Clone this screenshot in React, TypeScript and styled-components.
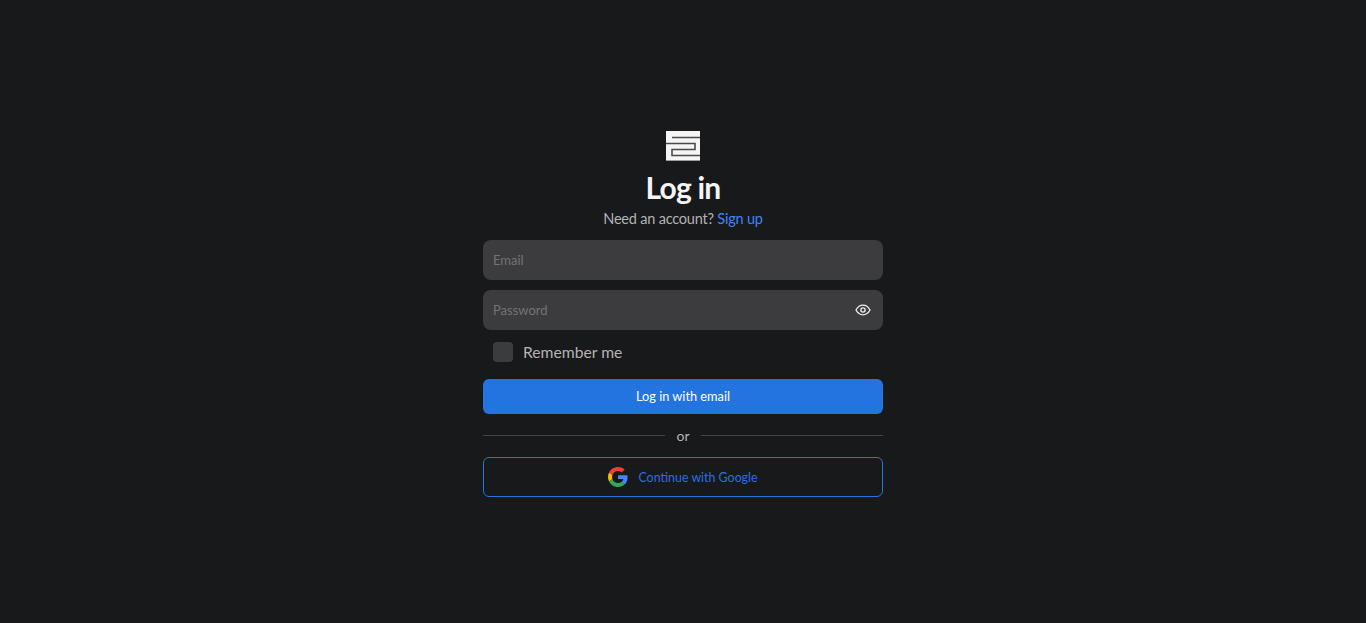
import React from 'react';
import styled, {createGlobalStyle} from 'styled-components';

const GlobalStyle = createGlobalStyle`
  html, body {
    margin: 0;
    height: 100%;
    background-color: #18191b;
  }
  body {
    font-family: 'Lato', 'Noto Sans', sans-serif;
  }
`;

function Logo(): JSX.Element {
  return (
    <LogoSvg viewBox="0 0 34 30" width={34} height={30}>
      <rect width="34" height="29.6" fill="#f5f5f5" />
      <path
        d="M6 6.5H34M0 12.5H29V18.5H6V24.5H34"
        fill="none"
        stroke="#4a4a4c"
        strokeWidth="1.6"
      />
    </LogoSvg>
  );
}

function EyeIcon(): JSX.Element {
  return (
    <svg viewBox="0 0 24 24" width={16} height={16} fill="none" stroke="#f0f0f0" strokeWidth="2">
      <path d="M1.5 12S5.5 4.8 12 4.8 22.5 12 22.5 12 18.5 19.2 12 19.2 1.5 12 1.5 12Z" />
      <circle cx="12" cy="12" r="3.2" />
    </svg>
  );
}

function GoogleIcon(): JSX.Element {
  return (
    <svg viewBox="0 0 48 48" width={20} height={20}>
      <path fill="#EA4335" d="M24 9.5c3.54 0 6.71 1.22 9.21 3.6l6.85-6.85C35.9 2.38 30.47 0 24 0 14.62 0 6.51 5.38 2.56 13.22l7.98 6.19C12.43 13.72 17.74 9.5 24 9.5z" />
      <path fill="#4285F4" d="M46.98 24.55c0-1.57-.15-3.09-.38-4.55H24v9.02h12.94c-.58 2.96-2.26 5.48-4.78 7.18l7.73 6c4.51-4.18 7.09-10.36 7.09-17.65z" />
      <path fill="#FBBC05" d="M10.53 28.59c-.48-1.45-.76-2.99-.76-4.59s.27-3.14.76-4.59l-7.98-6.19C.92 16.46 0 20.12 0 24c0 3.88.92 7.54 2.56 10.78l7.97-6.19z" />
      <path fill="#34A853" d="M24 48c6.48 0 11.93-2.13 15.89-5.81l-7.73-6c-2.15 1.45-4.92 2.3-8.16 2.3-6.26 0-11.57-4.22-13.47-9.91l-7.98 6.19C6.51 42.62 14.62 48 24 48z" />
    </svg>
  );
}

export default function App(): JSX.Element {
  return (
    <Page>
      <GlobalStyle />
      <Card>
        <Logo />
        <Title>Log in</Title>
        <Subtitle>
          Need an account? <SignUp href="#">Sign up</SignUp>
        </Subtitle>
        <Field>
          <Input type="email" placeholder="Email" />
        </Field>
        <Field>
          <Input type="password" placeholder="Password" />
          <EyeButton type="button">
            <EyeIcon />
          </EyeButton>
        </Field>
        <RememberRow>
          <CheckBox />
          <RememberLabel>Remember me</RememberLabel>
        </RememberRow>
        <PrimaryButton type="button">Log in with email</PrimaryButton>
        <Divider>
          <Rule />
          <DividerText>or</DividerText>
          <Rule />
        </Divider>
        <GoogleButton type="button">
          <GoogleIcon />
          Continue with Google
        </GoogleButton>
      </Card>
    </Page>
  );
}

const Page = styled.div`
  min-height: 623px;
  display: flex;
  justify-content: center;
  padding-top: 131px;
  box-sizing: border-box;
  background-color: #18191b;
`;
const Card = styled.div`
  width: 400px;
  display: flex;
  flex-direction: column;
  align-items: center;
`;
const LogoSvg = styled.svg`
  display: block;
  flex-shrink: 0;
`;
const Title = styled.h1`
  margin: 6px 0 0;
  font-size: 30px;
  line-height: 41px;
  font-weight: 700;
  color: #f5f5f5;
  letter-spacing: -0.8px;
`;
const Subtitle = styled.div`
  margin-bottom: 11px;
  font-size: 14.5px;
  line-height: 21px;
  letter-spacing: -0.2px;
  color: #b4b4b4;
`;
const SignUp = styled.a`
  color: #3f84ff;
  text-decoration: none;
`;
const Field = styled.div`
  position: relative;
  width: 100%;
  margin-bottom: 10px;
`;
const Input = styled.input`
  display: block;
  width: 100%;
  height: 40px;
  box-sizing: border-box;
  padding: 0 10px;
  border: none;
  border-radius: 8px;
  background-color: #3c3c3e;
  color: #f5f5f5;
  font-family: inherit;
  font-size: 13px;
  &::placeholder {
    color: #737373;
    opacity: 1;
  }
`;
const EyeButton = styled.button`
  position: absolute;
  right: 12px;
  top: 12px;
  padding: 0;
  border: none;
  background: none;
  display: flex;
`;
const RememberRow = styled.label`
  width: 100%;
  box-sizing: border-box;
  padding-left: 10px;
  margin-top: 2px;
  display: flex;
  align-items: center;
  gap: 10px;
`;
const CheckBox = styled.span`
  width: 20px;
  height: 20px;
  border-radius: 4px;
  background-color: #3c3c3e;
`;
const RememberLabel = styled.span`
  font-size: 15.7px;
  line-height: 20px;
  color: #b4b4b4;
`;
const PrimaryButton = styled.button`
  width: 100%;
  height: 35px;
  margin-top: 17px;
  padding: 0 0 1px;
  border: none;
  border-radius: 6px;
  background-color: #2474e0;
  color: #ffffff;
  font-family: inherit;
  font-size: 12.75px;
`;
const Divider = styled.div`
  width: 100%;
  height: 20px;
  margin-top: 11px;
  display: flex;
  align-items: center;
  gap: 11px;
`;
const Rule = styled.div`
  flex: 1;
  height: 1px;
  background-color: #444446;
`;
const DividerText = styled.span`
  font-size: 14px;
  color: #b4b4b4;
`;
const GoogleButton = styled.button`
  width: 100%;
  height: 40px;
  margin-top: 12px;
  box-sizing: border-box;
  border: 1px solid #2474e0;
  border-radius: 6px;
  background: transparent;
  color: #2b6fe0;
  font-family: inherit;
  font-size: 12.4px;
  display: flex;
  align-items: center;
  justify-content: center;
  gap: 10px;
`;
